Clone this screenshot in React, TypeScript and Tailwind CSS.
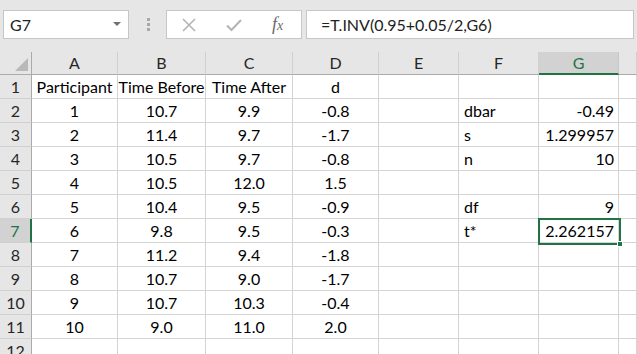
import React from 'react'

const FONT = { fontFamily: 'Lato, "Liberation Sans", sans-serif' }

const cols = ['A', 'B', 'C', 'D', 'E', 'F', 'G', 'H']
const colWidths = ['w-[86px]', 'w-[88px]', 'w-[87px]', 'w-[86px]', 'w-[80px]', 'w-[80px]', 'w-[80px]', 'flex-1']

type Cell = { v: string; align?: 'c' | 'l' | 'r' }

const body: string[][] = [
  ['1', '10.7', '9.9', '-0.8', '', 'dbar', '-0.49'],
  ['2', '11.4', '9.7', '-1.7', '', 's', '1.299957'],
  ['3', '10.5', '9.7', '-0.8', '', 'n', '10'],
  ['4', '10.5', '12.0', '1.5', '', '', ''],
  ['5', '10.4', '9.5', '-0.9', '', 'df', '9'],
  ['6', '9.8', '9.5', '-0.3', '', 't*', '2.262157'],
  ['7', '11.2', '9.4', '-1.8', '', '', ''],
  ['8', '10.7', '9.0', '-1.7', '', '', ''],
  ['9', '10.7', '10.3', '-0.4', '', '', ''],
  ['10', '9.0', '11.0', '2.0', '', '', ''],
]

const rows: Cell[][] = [
  [{ v: 'Participant' }, { v: 'Time Before' }, { v: 'Time After' }, { v: 'd' }, { v: '' }, { v: '' }, { v: '' }, { v: '' }],
  ...body.map(r => [
    { v: r[0] }, { v: r[1] }, { v: r[2] }, { v: r[3] }, { v: r[4] },
    { v: r[5], align: 'l' as const }, { v: r[6], align: 'r' as const }, { v: '' },
  ]),
  Array.from({ length: 8 }, () => ({ v: '' })),
]

function Toolbar() {
  return (
    <div className="flex h-[52px] items-start bg-[#e6e6e6] pt-[10px]">
      <div className="ml-[3px] flex h-[29px] w-[126px] items-center justify-between border border-[#c6c6c6] bg-white pl-[6px] pr-[7px] text-[16px] text-[#222]">
        <span>G7</span>
        <svg width="8" height="5" viewBox="0 0 8 5"><path d="M0 0h8L4 4z" fill="#707070" /></svg>
      </div>
      <div className="ml-[18px] mt-[8px] flex flex-col gap-[2px]">
        <div className="h-[3px] w-[3px] bg-[#a8a8a8]" />
        <div className="h-[3px] w-[3px] bg-[#a8a8a8]" />
        <div className="h-[3px] w-[3px] bg-[#a8a8a8]" />
      </div>
      <div className="ml-[16px] flex h-[29px] w-[136px] items-center border border-[#c6c6c6] bg-white">
        <svg className="ml-[15px]" width="14" height="14" viewBox="0 0 14 14">
          <path d="M1 1l12 12M13 1L1 13" stroke="#b4b4b4" strokeWidth="1.6" />
        </svg>
        <svg className="ml-[30px]" width="16" height="14" viewBox="0 0 16 14">
          <path d="M1 7.5l4.5 4.5L15 2" stroke="#b4b4b4" strokeWidth="2" fill="none" />
        </svg>
        <span className="ml-[30px] italic text-[#6a6a6a] text-[18px]" style={{ fontFamily: '"Liberation Serif", serif' }}>
          f<span className="text-[14px]">x</span>
        </span>
      </div>
      <div className="ml-[4px] flex h-[29px] w-[328px] items-center border border-[#c6c6c6] bg-white pl-[14px] text-[16px] text-[#222]">
        =T.INV(0.95+0.05/2,G6)
      </div>
    </div>
  )
}

function HeaderRow() {
  return (
    <div className="flex h-[23px]">
      <div className="relative w-[32px] shrink-0 border-r border-b border-[#ababab] bg-[#e6e6e6]">
        <svg className="absolute right-[3px] bottom-[3px]" width="13" height="13" viewBox="0 0 13 13">
          <path d="M13 0V13H0z" fill="#b9b9b9" />
        </svg>
      </div>
      {cols.map((c, i) => {
        const sel = c === 'G'
        return (
          <div
            key={c}
            className={`${colWidths[i]} shrink-0 flex items-center justify-center border-r ${
              sel
                ? 'border-b-2 border-r-[#c8c8c8] border-b-[#217346] bg-[#d2d2d2] text-[#217346]'
                : 'border-b border-r-[#d0d0d0] border-b-[#ababab] bg-[#e6e6e6] text-[#262626]'
            } text-[16px]`}
          >
            {c !== 'H' ? c : ''}
          </div>
        )
      })}
    </div>
  )
}

export default function App() {
  return (
    <div className="h-[354px] w-[637px] overflow-hidden bg-white" style={FONT}>
      <Toolbar />
      <div className="relative">
        <HeaderRow />
        {rows.map((r, ri) => {
          const rowNum = ri + 1
          const sel = rowNum === 7
          return (
            <div key={ri} className="flex h-[24px]">
              <div
                className={`w-[32px] shrink-0 flex items-center justify-center border-b border-b-[#d0d0d0] text-[16px] ${
                  sel
                    ? 'border-r-2 border-r-[#217346] bg-[#d2d2d2] text-[#217346]'
                    : 'border-r border-r-[#ababab] bg-[#e6e6e6] text-[#262626]'
                }`}
              >
                {rowNum}
              </div>
              {r.map((cell, ci) => (
                <div
                  key={ci}
                  className={`${colWidths[ci]} shrink-0 flex items-center overflow-hidden whitespace-nowrap border-r border-b border-[#d4d4d4] text-[16px] text-black ${
                    cell.align === 'l' ? 'justify-start pl-[5px]' : cell.align === 'r' ? 'justify-end pr-[4px]' : 'justify-center'
                  }`}
                >
                  {cell.v}
                </div>
              ))}
            </div>
          )
        })}
        {/* active cell G7 */}
        <div className="absolute left-[538px] top-[166px] h-[27px] w-[83px] border-2 border-[#217346]" />
        <div className="absolute left-[617px] top-[189px] h-[6px] w-[6px] border border-white bg-[#217346]" />
      </div>
    </div>
  )
}
